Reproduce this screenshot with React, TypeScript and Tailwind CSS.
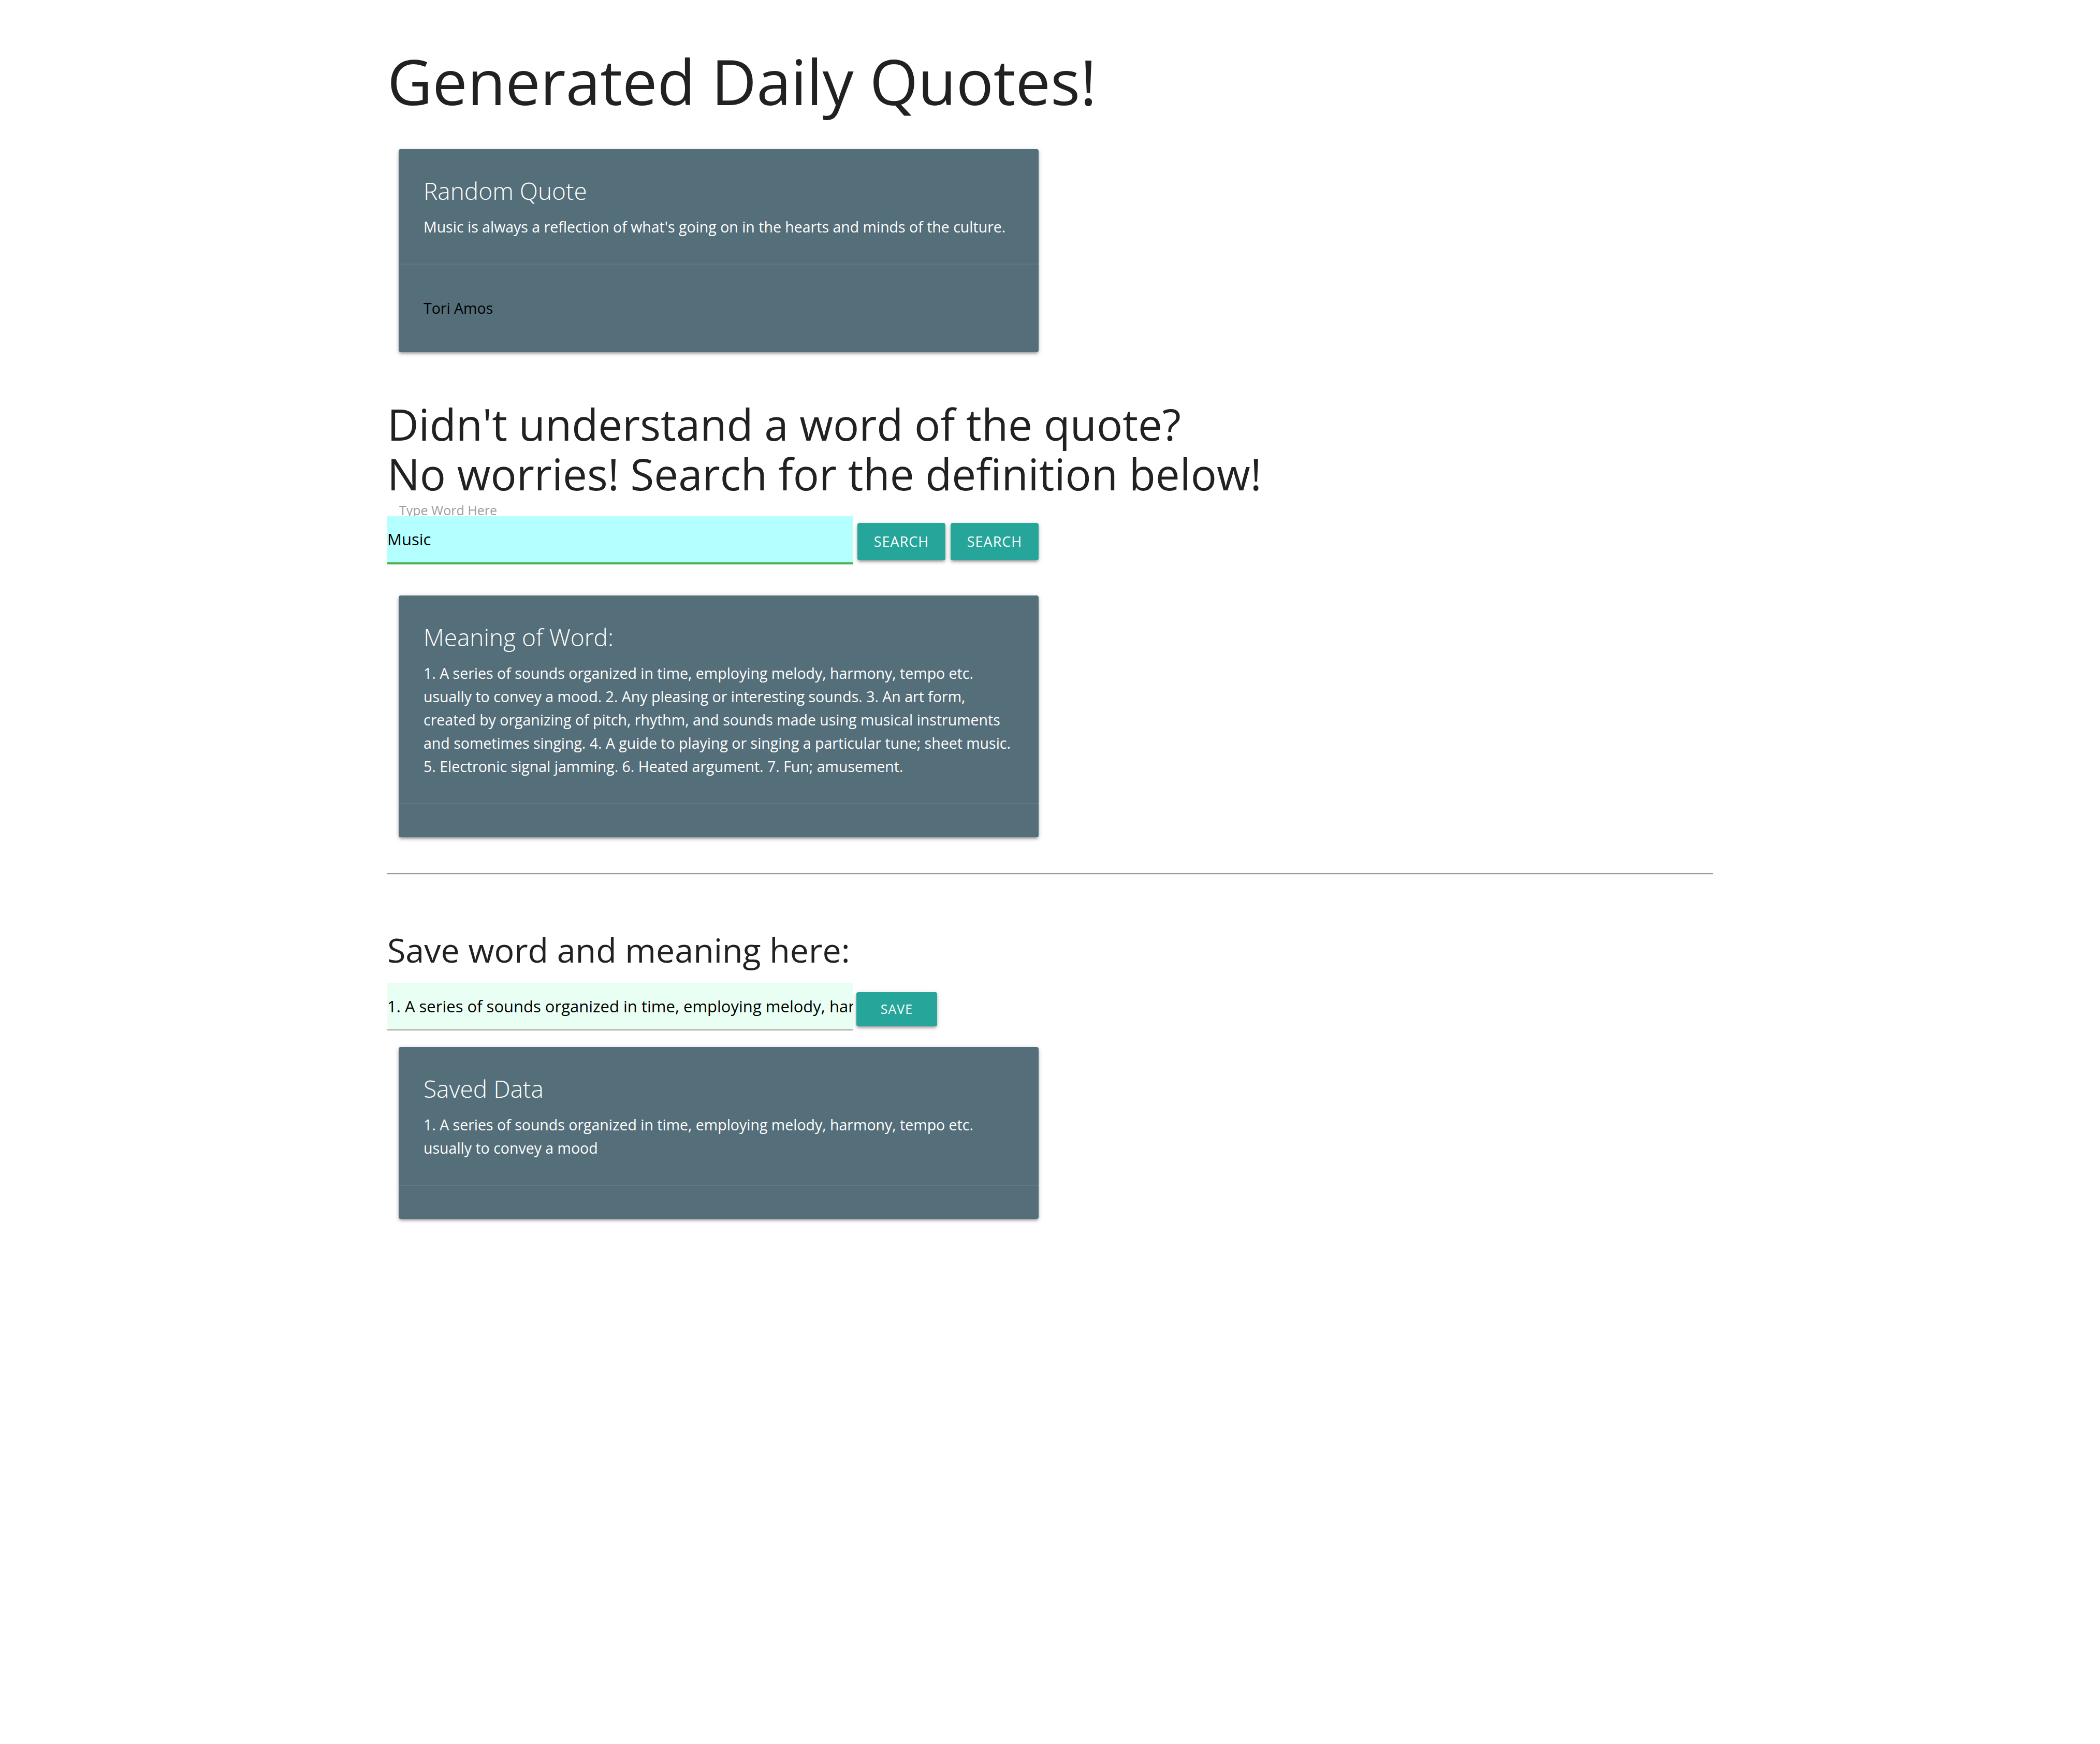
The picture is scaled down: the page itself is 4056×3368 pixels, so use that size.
import React from 'react';

interface CardProps {
    title: string;
    lines: string[];
    footer?: string;
}

const MEANING = [
    '1. A series of sounds organized in time, employing melody, harmony, tempo etc.',
    'usually to convey a mood. 2. Any pleasing or interesting sounds. 3. An art form,',
    'created by organizing of pitch, rhythm, and sounds made using musical instruments',
    'and sometimes singing. 4. A guide to playing or singing a particular tune; sheet music.',
    '5. Electronic signal jamming. 6. Heated argument. 7. Fun; amusement.',
];

const SAVED = [
    '1. A series of sounds organized in time, employing melody, harmony, tempo etc.',
    'usually to convey a mood',
];

const cardShadow =
    'shadow-[0_4px_4px_0_rgba(0,0,0,0.14),0_6px_2px_-4px_rgba(0,0,0,0.12),0_2px_10px_0_rgba(0,0,0,0.2)]';

const Card: React.FC<CardProps> = ({ title, lines, footer }) => (
    <div className={`ml-[22px] w-[1236px] rounded-[4px] bg-[#546e7a] ${cardShadow}`}>
        <div className="p-[48px]">
            <span className="mb-[16px] block text-[46px] font-light leading-[64px] text-white">{title}</span>
            <p className="whitespace-nowrap text-[28.5px] leading-[45px] text-white">
                {lines.map((line, i) => (
                    <React.Fragment key={i}>
                        {i > 0 && <br />}
                        {line}
                    </React.Fragment>
                ))}
            </p>
        </div>
        <div className="border-t-2 border-[rgba(160,160,160,0.2)] px-[48px] py-[32px]">
            {footer && <p className="my-[30px] text-[28.5px] leading-[45px] text-black">{footer}</p>}
        </div>
    </div>
);

const Button: React.FC<{ label: string; className: string }> = ({ label, className }) => (
    <button
        className={`flex items-center justify-center rounded-[4px] bg-[#26a69a] uppercase tracking-[1px] text-white ${cardShadow} ${className}`}
    >
        {label}
    </button>
);

const App: React.FC = () => {
    return (
        <div className="min-h-[3368px] bg-white font-['Open_Sans','Noto_Sans',sans-serif] text-[#212121]">
            <div className="mx-auto w-[2560px] pt-[87px]">
                <h1 className="text-[120px] leading-[139px]">Generated Daily Quotes!</h1>

                <div className="mt-[62px]">
                    <Card
                        title="Random Quote"
                        lines={["Music is always a reflection of what's going on in the hearts and minds of the culture."]}
                        footer="Tori Amos"
                    />
                </div>

                <h3 className="mt-[91px] text-[83.5px] leading-[96px]">
                    <span className="block">Didn't understand a word of the quote?</span>
                    <span className="block">No worries! Search for the definition below!</span>
                </h3>

                <div className="ml-[23px] mt-[7px] h-[26px] text-[25px] leading-[30px] text-[#9e9e9e]">Type Word Here</div>
                <div className="flex items-start">
                    <input
                        defaultValue="Music"
                        className="h-[94px] w-[900px] border-b-4 border-[#4caf50] bg-[#b4ffff] p-0 text-[31px] text-black outline-none"
                    />
                    <Button label="Search" className="ml-[8px] mt-[14px] h-[72px] w-[170px] text-[27px]" />
                    <Button label="Search" className="ml-[10px] mt-[14px] h-[72px] w-[170px] text-[27px]" />
                </div>

                <div className="mt-[60px]">
                    <Card title="Meaning of Word:" lines={MEANING} />
                </div>

                <div className="mt-[69px] h-[4px] border-b-2 border-t-2 border-b-[#eeeeee] border-t-[#9a9a9a]" />

                <h4 className="mt-[107px] text-[64.5px] leading-[75px]">Save word and meaning here:</h4>

                <div className="mt-[26px] flex items-start">
                    <input
                        defaultValue={MEANING.join(' ')}
                        className="h-[92px] w-[900px] border-b-2 border-[#9e9e9e] bg-[#eafff3] p-0 text-[31px] text-black outline-none"
                    />
                    <Button label="Save" className="ml-[6px] mt-[18px] h-[66px] w-[156px] text-[25px]" />
                </div>

                <div className="mt-[32px]">
                    <Card title="Saved Data" lines={SAVED} />
                </div>
            </div>
        </div>
    );
};

export default App;
